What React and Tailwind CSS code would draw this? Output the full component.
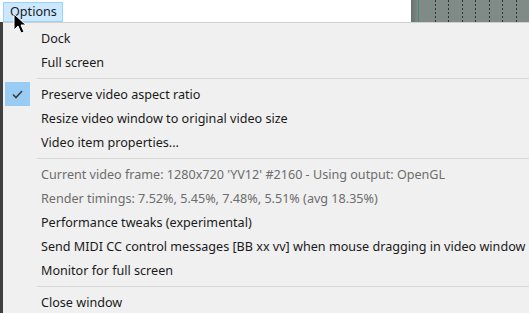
import React from "react";

function Item({ children, gray, checked }) {
  return (
    <div className="relative flex h-[24px] items-center pl-[38px] pt-[2px]">
      {checked && (
        <div className="absolute left-[2px] top-0 flex h-[24px] w-[25px] items-center justify-center bg-[#99ccf5]">
          <svg width="11" height="9" viewBox="0 0 11 9">
            <path d="M1 4.5 L4 7.5 L10 1" fill="none" stroke="#3c3c3c" strokeWidth="1.6" />
          </svg>
        </div>
      )}
      <span className={gray ? "text-[#6d6d6d]" : "text-[#1a1a1a]"}>{children}</span>
    </div>
  );
}

function Sep() {
  return (
    <div className="flex h-[8px] items-center pl-[34px]">
      <div className="h-px w-full bg-[#d7d7d7]" />
    </div>
  );
}

export default function App() {
  return (
    <div
      className="relative h-[313px] w-[529px] overflow-hidden bg-white text-[12.6px] leading-none"
      style={{ fontFamily: '"Noto Sans", "Open Sans", sans-serif' }}
    >
      <div className="flex h-[22px]">
        <div className="flex flex-1 items-start pl-[3px] pt-[2px]">
          <div className="flex h-[20px] w-[60px] items-center border border-[#99d1ff] bg-[#cce8ff] pl-[6px] pt-[1px] text-[#1a1a1a]">
            Options
          </div>
        </div>
        <div className="relative h-full w-[118px] bg-[#808a86]">
          <div className="absolute left-0 top-0 h-full w-[7px] bg-gradient-to-r from-[#6a706e] to-[#808a86]" />
          <div className="absolute left-[7px] top-0 h-full w-px bg-[#4a8a78]" />
          {[24, 37, 51, 64, 78, 91, 105].map((x) => (
            <div
              key={x}
              className="absolute top-0 h-full w-px"
              style={{
                left: x,
                backgroundImage: "repeating-linear-gradient(to bottom, #333 0 2px, transparent 2px 4px)",
              }}
            />
          ))}
        </div>
      </div>
      <div className="flex h-[291px]">
        <div className="w-[3px] bg-[#3f3f3f]" />
        <div className="flex-1 border-t border-[#cfcfcf] bg-[#f0f0f0] pt-[3px]">
          <Item>Dock</Item>
          <Item>Full screen</Item>
          <Sep />
          <Item checked>Preserve video aspect ratio</Item>
          <Item>Resize video window to original video size</Item>
          <Item>Video item properties...</Item>
          <Sep />
          <Item gray>Current video frame: 1280x720 'YV12' #2160 - Using output: OpenGL</Item>
          <Item gray>Render timings: 7.52%, 5.45%, 7.48%, 5.51% (avg 18.35%)</Item>
          <Item>Performance tweaks (experimental)</Item>
          <Item>Send MIDI CC control messages [BB xx vv] when mouse dragging in video window</Item>
          <Item>Monitor for full screen</Item>
          <Sep />
          <Item>Close window</Item>
        </div>
      </div>
      <svg className="absolute left-[13px] top-[13px]" width="14" height="22" viewBox="0 0 14 22">
        <path d="M1 1 L1 17 L5 13 L8 20 L11 19 L8 12 L13 12 Z" fill="#000" stroke="#fff" strokeWidth="1" />
      </svg>
    </div>
  );
}
